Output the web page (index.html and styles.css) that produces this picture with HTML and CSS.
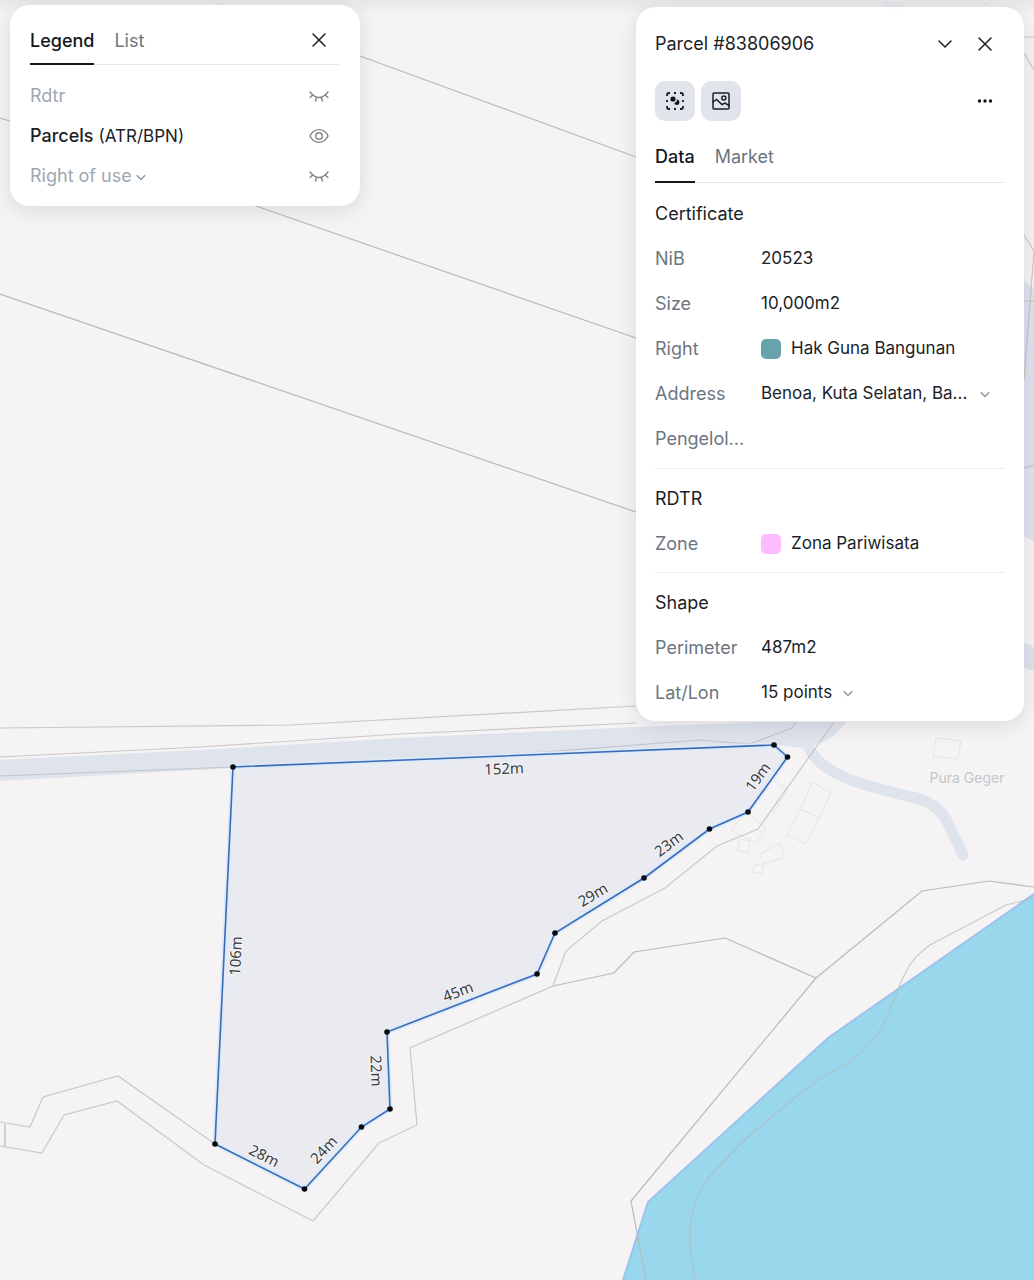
FILE: index.html
```html
<!DOCTYPE html>
<html lang="en">
<head>
<meta charset="utf-8">
<meta name="viewport" content="width=device-width, initial-scale=1">
<title>Parcel map</title>
<link rel="stylesheet" href="styles.css">
</head>
<body>
<svg class="map" viewBox="0 0 1034 1280" preserveAspectRatio="xMinYMin slice" role="img" aria-label="Parcel map">
  <defs>
    <linearGradient id="shade" x1="0" y1="0" x2="0" y2="1"><stop offset="0" stop-color="#e7e6e8"/><stop offset="1" stop-color="#e7e6e8" stop-opacity="0"/></linearGradient>
  </defs>
  <!-- roads -->
  <g class="road">
    <path class="road-fill" d="M0 760 L200 750 L400 738 L636 727 L760 722 L846 722 Q832 743 804 748 L774 745 L233 768 L0 781Z"/>
    <path class="road-line" d="M808 746 C822 778 872 787 912 797 Q936 802 947 821 L963 855"/>
    <path class="road-fill" d="M879 0 H898 L909 10 H885Z"/>
    <path class="road-fill" d="M1024 280 L1034 290 V542 L1024 536Z"/>
    <path class="road-fill" d="M1024 643 Q1030 644 1034 648 V671 L1024 668Z"/>
  </g>
  <g class="building">
    <path d="M936 738 L961 741 L958 759 L933 756Z"/>
    <path d="M812 782 L831 793 L819 818 L801 809Z"/>
    <path d="M801 809 L819 818 L806 844 L787 835Z"/>
    <path d="M760 854 L780 843 L785 857 L764 864Z"/>
    <path d="M740 839 L750 841 L748 853 L737 850Z"/>
    <path d="M755 865 L764 864 L762 874 L752 872Z"/>
    <path d="M746 812 L766 828 L756 843 L731 830Z"/>
    <path d="M752 798 L765 776 L788 789 L773 813"/>
  </g>
  <path class="sea" d="M1034 894 L828 1038 L648 1202 L623 1280 H1034Z"/>
  <path class="coast" d="M1034 894 L828 1038 L648 1202 L623 1280"/>
  <g class="boundary">
    <path d="M208 0 L222 5 M360 56 L636 157 M0 118 L10 121 M256 206 L636 338 M0 294 L636 512"/>
    <path class="light" d="M0 728 L290 725 L636 706 M0 757 L200 747 L400 734 L636 723"/>
    <path class="light" d="M0 776 L233 767 L480 757 L700 740 L750 744 L792 728 L796 722 M834 722 L758 829 L717 846 L665 888 L602 921 L566 951 L553 986 L410 1048 L417 1125 L379 1143 L313 1221 L204 1165 L117 1101 L64 1115 L42 1153 L0 1146"/>
    <path class="light" d="M0 1122 L30 1127 L43 1097 L118 1076 L215 1144"/>
    <path d="M5 1124 V1147 M553 986 L614 973 L634 952 L725 938 L816 978 L922 891 L989 881 L1034 887 M816 978 L631 1201 L646 1280"/>
    <path class="light" d="M1034 898 L1006 905 L930 945 Q914 956 907 970 Q900 982 896 996 L883 1025 Q874 1041 852 1061 C820 1075 790 1101 741 1143 L709 1177 Q694 1197 691 1221 Q688 1243 695 1280"/>
    <path class="light" d="M983 6 L994 0 M1024 37 H1034 M1024 53 L1034 70 M1024 235 L1034 251 L1024 380 M1024 301 H1034 M1024 468 L1034 465"/>
  </g>
  <path class="parcel" d="M233 767 L774 745 L787.5 757 L748 812 L709.5 829 L644 878 L555 933 L537 974 L387 1032 L390 1109 L361.5 1127 L304.5 1189 L215 1144Z"/>
  <path class="parcel-edge" d="M233 767 L774 745 L787.5 757 L748 812 L709.5 829 L644 878 L555 933 L537 974 L387 1032 L390 1109 L361.5 1127 L304.5 1189 L215 1144Z"/>
  <g class="vertex">
    <circle cx="233" cy="767" r="2.8"/><circle cx="774" cy="745" r="2.8"/><circle cx="787.5" cy="757" r="2.8"/><circle cx="748" cy="812" r="2.8"/><circle cx="709.5" cy="829" r="2.8"/><circle cx="644" cy="878" r="2.8"/><circle cx="555" cy="933" r="2.8"/><circle cx="537" cy="974" r="2.8"/><circle cx="387" cy="1032" r="2.8"/><circle cx="390" cy="1109" r="2.8"/><circle cx="361.5" cy="1127" r="2.8"/><circle cx="304.5" cy="1189" r="2.8"/><circle cx="215" cy="1144" r="2.8"/>
  </g>
  <g class="length">
    <text transform="translate(504 769) rotate(-2)" dy="5">152m</text>
    <text transform="translate(758 777) rotate(-54)" dy="5">19m</text>
    <text transform="translate(669 844) rotate(-37)" dy="5">23m</text>
    <text transform="translate(593 895) rotate(-31)" dy="5">29m</text>
    <text transform="translate(458 992) rotate(-21)" dy="5">45m</text>
    <text transform="translate(376 1071) rotate(88)" dy="5">22m</text>
    <text transform="translate(324 1150) rotate(-47)" dy="5">24m</text>
    <text transform="translate(264 1156) rotate(27)" dy="5">28m</text>
    <text transform="translate(236 956) rotate(-87)" dy="5">106m</text>
  </g>
  <text class="place" x="967" y="783">Pura Geger</text>
  <rect width="1034" height="14" fill="url(#shade)"/>
</svg>

<main class="overlay">
  <section class="card legend" aria-label="Legend">
    <header class="tabs">
      <button class="tab active" type="button">Legend</button>
      <button class="tab" type="button">List</button>
      <button class="icon-btn push" type="button" aria-label="Close"><svg class="icon" viewBox="0 0 20 20"><path class="ink" d="M4 4 L16 16 M16 4 L4 16"/></svg></button>
    </header>
    <ul class="layers">
      <li class="layer off"><span>Rdtr</span>
        <button class="icon-btn" type="button" aria-label="Show Rdtr"><svg class="icon" viewBox="0 0 20 20"><path d="M1 6 Q10 17 19 6 M3.8 9 L1 11.5 M7.5 11.5 L6.5 15 M12.5 11.5 L13.5 15 M16.2 9 L19 11.5"/></svg></button></li>
      <li class="layer"><span><b>Parcels</b> <span class="source">(ATR/BPN)</span></span>
        <button class="icon-btn" type="button" aria-label="Hide Parcels"><svg class="icon" viewBox="0 0 20 20"><path d="M1 10 C5 1.5 15 1.5 19 10 C15 18.5 5 18.5 1 10Z"/><circle cx="10" cy="10" r="3.2"/></svg></button></li>
      <li class="layer off"><button class="expand" type="button">Right of use <svg class="chevron" viewBox="0 0 10 10"><path d="M1.500 3.500 L5 7 L8.500 3.500"/></svg></button>
        <button class="icon-btn" type="button" aria-label="Show Right of use"><svg class="icon" viewBox="0 0 20 20"><path d="M1 6 Q10 17 19 6 M3.8 9 L1 11.5 M7.5 11.5 L6.5 15 M12.5 11.5 L13.5 15 M16.2 9 L19 11.5"/></svg></button></li>
    </ul>
  </section>

  <section class="card details" aria-label="Parcel details">
    <header class="title-row">
      <h1>Parcel #83806906</h1>
      <button class="icon-btn push" type="button" aria-label="Collapse"><svg class="icon" viewBox="0 0 20 20"><path class="ink" d="M4 7 L10 13 L16 7"/></svg></button>
      <button class="icon-btn" type="button" aria-label="Close"><svg class="icon" viewBox="0 0 20 20"><path class="ink" d="M4 4 L16 16 M16 4 L4 16"/></svg></button>
    </header>
    <div class="tools">
      <button class="tool" type="button" aria-label="Select shape"><svg class="icon" viewBox="0 0 20 20"><path class="ink bold" d="M2 5 V4 Q2 2 4 2 H5 M9 2 H11 M15 2 H16 Q18 2 18 4 V5 M18 9 V11 M18 15 V16 Q18 18 16 18 H15 M11 18 H9 M5 18 H4 Q2 18 2 16 V15 M2 11 V9"/><circle class="solid" cx="8" cy="8" r="2.6"/><path class="solid" d="M12 8.600 Q14.600 9 14.400 11.800 Q14.200 14 12 14 Q9.600 14 9.200 12 Q12 11.800 12 8.600Z"/></svg></button>
      <button class="tool" type="button" aria-label="Image"><svg class="icon" viewBox="0 0 20 20"><rect class="ink" x="2" y="2" width="16" height="16" rx="1"/><circle class="ink" cx="12.8" cy="7" r="2"/><path class="ink" d="M2 11 L5.5 8.5 L11 13.5 L14 12 L18 14.5"/></svg></button>
      <button class="icon-btn push" type="button" aria-label="More"><svg class="icon" viewBox="0 0 20 20"><g class="solid"><circle cx="4.5" cy="10" r="1.7"/><circle cx="10" cy="10" r="1.7"/><circle cx="15.5" cy="10" r="1.7"/></g></svg></button>
    </div>
    <nav class="tabs">
      <button class="tab active" type="button">Data</button>
      <button class="tab" type="button">Market</button>
    </nav>
    <section class="group">
      <h2>Certificate</h2>
      <dl>
        <dt>NiB</dt><dd>20523</dd>
        <dt>Size</dt><dd>10,000m2</dd>
        <dt>Right</dt><dd><i class="swatch teal"></i>Hak Guna Bangunan</dd>
        <dt>Address</dt><dd><button class="expand wide full" type="button"><span>Benoa, Kuta Selatan, Ba...</span><svg class="chevron" viewBox="0 0 10 10"><path d="M1.500 3.500 L5 7 L8.500 3.500"/></svg></button></dd>
        <dt>Pengelol...</dt><dd></dd>
      </dl>
    </section>
    <section class="group">
      <h2>RDTR</h2>
      <dl><dt>Zone</dt><dd><i class="swatch pink"></i>Zona Pariwisata</dd></dl>
    </section>
    <section class="group">
      <h2>Shape</h2>
      <dl>
        <dt>Perimeter</dt><dd>487m2</dd>
        <dt>Lat/Lon</dt><dd><button class="expand wide" type="button"><span>15 points</span><svg class="chevron" viewBox="0 0 10 10"><path d="M1.500 3.500 L5 7 L8.500 3.500"/></svg></button></dd>
      </dl>
    </section>
  </section>
</main>
</body>
</html>
```
FILE: styles.css
```css
* { box-sizing: border-box; }

body {
  margin: 0;
  min-height: 100vh;
  position: relative;
  background: #f5f3f4;
  color: #1b1e26;
  font: 18px/24px Inter, "Noto Sans", sans-serif;
}

button {
  padding: 0;
  border: 0;
  background: none;
  color: inherit;
  font: inherit;
  cursor: pointer;
}

/* Map */
.map {
  position: absolute;
  inset: 0;
  width: 100%;
  height: 100%;
}
.map path { fill: none; }
.map .road-fill { fill: #dfe3ec; }
.road-line { stroke: #dfe3ec; stroke-width: 11; stroke-linecap: round; }
.building { stroke: #e5e4e6; stroke-width: 1; }
.map .sea { fill: #99d8ec; }
.coast { stroke: #9cc3ee; stroke-width: 2; }
.boundary { stroke: #b4bcbb; stroke-width: 1.2; }
.boundary .light { stroke: #b5b8bb; stroke-opacity: .7; }
.map .parcel { fill: #e9ebf1; stroke: #dceafb; stroke-width: 5; }
.parcel-edge { stroke: #3b6cb3; stroke-width: 1.6; }
.vertex { fill: #080a10; }
.length {
  fill: #3b3d40;
  stroke: #f2f3f6;
  stroke-width: 2;
  paint-order: stroke;
  font: 15px "Noto Sans", sans-serif;
  text-anchor: middle;
}
.place { fill: #c5c6ca; font-size: 14px; text-anchor: middle; }

/* Floating cards */
.overlay {
  position: relative;
  display: flex;
  flex-wrap: wrap;
  justify-content: space-between;
  align-items: flex-start;
  gap: 20px;
  padding: 5px 10px 20px;
}
.card {
  border-radius: 20px;
  background: rgba(255, 255, 255, .96);
  box-shadow: 0 4px 20px rgba(30, 35, 50, .12);
}
.legend { width: 350px; max-width: 100%; padding: 10px 21px 10px 20px; }
.details { width: 388px; max-width: 100%; margin-top: 2px; padding: 12px 19px 0; }

.tabs {
  display: flex;
  gap: 20px;
  height: 50px;
  border-bottom: 1px solid #e6e8ea;
}
.tab {
  height: 50px;
  border-bottom: 2px solid transparent;
  color: #6c7580;
}
.legend .tab { padding-top: 3px; }
.tab.active { border-color: #14171d; color: #14171d; font-weight: 500; }
.push { margin-left: auto; }

.icon-btn { display: grid; place-items: center; width: 40px; }
.icon { width: 20px; height: 20px; fill: none; stroke: #7b858d; stroke-width: 1.4; stroke-linecap: round; }
.icon .ink { stroke: #1b1e24; stroke-width: 1.5; }
.icon .bold { stroke-width: 1.8; stroke-linecap: butt; }
.icon .solid { fill: #10131a; stroke: none; }
.chevron { width: 12px; height: 12px; fill: none; stroke: #8e969d; stroke-width: 1.2; flex: none; }
.layer .chevron { vertical-align: -1px; margin-left: -2px; }

.layers { margin: 0; padding: 11px 0 0; list-style: none; }
.layer { display: flex; justify-content: space-between; height: 40px; line-height: 40px; }
.layer b { font-weight: 500; }
.source { font-size: 17px; }
.off { color: #9da8b1; }

.title-row { display: flex; height: 50px; align-items: center; }
h1, h2 { margin: 0; font-size: 18px; font-weight: 400; }
.tools { display: flex; gap: 6px; height: 64px; align-items: center; }
.tool {
  display: grid;
  place-items: center;
  width: 40px;
  height: 40px;
  border-radius: 10px;
  background: #e2e4ec;
}

.group { padding: 7px 0 6px; line-height: 45px; }
.tabs + .group { padding: 8px 0 7px; }
.group + .group { border-top: 1px solid #eceef0; }
dl { display: grid; grid-template-columns: 96px minmax(0, 1fr); column-gap: 10px; margin: 0; }
dt { color: #6c7681; white-space: nowrap; }
dd { display: flex; align-items: center; height: 45px; margin: 0; font-size: 17px; }
.swatch { width: 20px; height: 20px; margin-right: 10px; border-radius: 5px; flex: none; }
.teal { background: #68a3ad; }
.pink { background: #ffbdff; }
.wide { display: flex; align-items: center; gap: 10px; white-space: nowrap; }
.full { width: 100%; justify-content: space-between; padding-right: 14px; }
```
